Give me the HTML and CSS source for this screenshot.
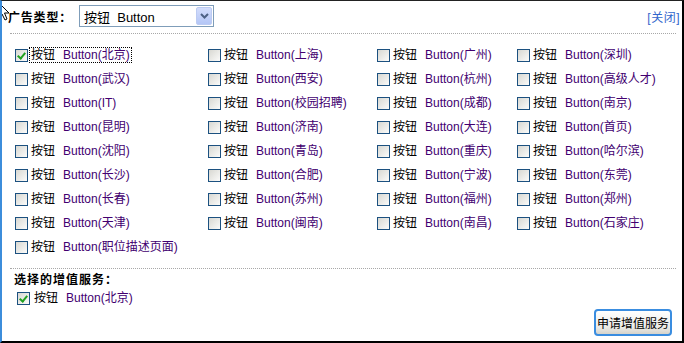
FILE: index.html
```html
<!DOCTYPE html>
<html lang="zh-CN">
<head>
  <meta charset="UTF-8">
  <title>广告类型</title>
  <link rel="stylesheet" href="styles.css">
</head>
<body>
  <div class="panel">
    <div class="head">
      <span class="head-title">广告类型：</span>
      <div class="select">
        <span class="select-value">按钮&nbsp; Button</span>
        <span class="select-arrow">
          <svg width="9" height="6" viewBox="0 0 9 6"><path d="M1 1 L4.5 4.5 L8 1" fill="none" stroke="#4d6185" stroke-width="2"/></svg>
        </span>
      </div>
      <a class="close" href="#">[关闭]</a>
    </div>

    <div class="types">
      <label class="item"><span class="cb checked"></span><span class="txt focus">按钮<span class="en">Button(北京)</span></span></label>
      <label class="item"><span class="cb"></span><span class="txt">按钮<span class="en">Button(上海)</span></span></label>
      <label class="item"><span class="cb"></span><span class="txt">按钮<span class="en">Button(广州)</span></span></label>
      <label class="item"><span class="cb"></span><span class="txt">按钮<span class="en">Button(深圳)</span></span></label>

      <label class="item"><span class="cb"></span><span class="txt">按钮<span class="en">Button(武汉)</span></span></label>
      <label class="item"><span class="cb"></span><span class="txt">按钮<span class="en">Button(西安)</span></span></label>
      <label class="item"><span class="cb"></span><span class="txt">按钮<span class="en">Button(杭州)</span></span></label>
      <label class="item"><span class="cb"></span><span class="txt">按钮<span class="en">Button(高级人才)</span></span></label>

      <label class="item"><span class="cb"></span><span class="txt">按钮<span class="en">Button(IT)</span></span></label>
      <label class="item"><span class="cb"></span><span class="txt">按钮<span class="en">Button(校园招聘)</span></span></label>
      <label class="item"><span class="cb"></span><span class="txt">按钮<span class="en">Button(成都)</span></span></label>
      <label class="item"><span class="cb"></span><span class="txt">按钮<span class="en">Button(南京)</span></span></label>

      <label class="item"><span class="cb"></span><span class="txt">按钮<span class="en">Button(昆明)</span></span></label>
      <label class="item"><span class="cb"></span><span class="txt">按钮<span class="en">Button(济南)</span></span></label>
      <label class="item"><span class="cb"></span><span class="txt">按钮<span class="en">Button(大连)</span></span></label>
      <label class="item"><span class="cb"></span><span class="txt">按钮<span class="en">Button(首页)</span></span></label>

      <label class="item"><span class="cb"></span><span class="txt">按钮<span class="en">Button(沈阳)</span></span></label>
      <label class="item"><span class="cb"></span><span class="txt">按钮<span class="en">Button(青岛)</span></span></label>
      <label class="item"><span class="cb"></span><span class="txt">按钮<span class="en">Button(重庆)</span></span></label>
      <label class="item"><span class="cb"></span><span class="txt">按钮<span class="en">Button(哈尔滨)</span></span></label>

      <label class="item"><span class="cb"></span><span class="txt">按钮<span class="en">Button(长沙)</span></span></label>
      <label class="item"><span class="cb"></span><span class="txt">按钮<span class="en">Button(合肥)</span></span></label>
      <label class="item"><span class="cb"></span><span class="txt">按钮<span class="en">Button(宁波)</span></span></label>
      <label class="item"><span class="cb"></span><span class="txt">按钮<span class="en">Button(东莞)</span></span></label>

      <label class="item"><span class="cb"></span><span class="txt">按钮<span class="en">Button(长春)</span></span></label>
      <label class="item"><span class="cb"></span><span class="txt">按钮<span class="en">Button(苏州)</span></span></label>
      <label class="item"><span class="cb"></span><span class="txt">按钮<span class="en">Button(福州)</span></span></label>
      <label class="item"><span class="cb"></span><span class="txt">按钮<span class="en">Button(郑州)</span></span></label>

      <label class="item"><span class="cb"></span><span class="txt">按钮<span class="en">Button(天津)</span></span></label>
      <label class="item"><span class="cb"></span><span class="txt">按钮<span class="en">Button(闽南)</span></span></label>
      <label class="item"><span class="cb"></span><span class="txt">按钮<span class="en">Button(南昌)</span></span></label>
      <label class="item"><span class="cb"></span><span class="txt">按钮<span class="en">Button(石家庄)</span></span></label>

      <label class="item"><span class="cb"></span><span class="txt">按钮<span class="en">Button(职位描述页面)</span></span></label>
    </div>

    <div class="chosen">
      <div class="chosen-title">选择的增值服务：</div>
      <label class="item chosen-item"><span class="cb checked"></span><span class="txt">按钮<span class="en">Button(北京)</span></span></label>
      <div class="actions">
        <button class="apply">申请增值服务</button>
      </div>
    </div>

    <svg class="cursor" width="12" height="19" viewBox="0 0 12 19"><path d="M-3 1 L-3 15 L0 12 L3 18 L5 17 L2.5 11 L7 11 Z" fill="#fff" stroke="#000" stroke-width="1"/></svg>
  </div>
</body>
</html>
```

FILE: styles.css
```css
body {
  margin: 0;
  background-color: #fff;
  font-family: "Liberation Sans", "Noto Sans CJK SC", sans-serif;
  font-size: 12px;
  color: #000;
}
.panel {
  position: relative;
  height: 343px;
  box-sizing: border-box;
  border-top: 1px solid #222;
  border-left: 2px solid #3c8ddb;
  border-right: 2px solid #000;
  border-bottom: 2px solid #000;
  overflow: hidden;
}
.head {
  display: flex;
  align-items: center;
  height: 22px;
  padding: 4px 2px 0 6px;
}
.head-title {
  width: 71px;
  font-weight: bold;
  letter-spacing: 0.8px;
  white-space: nowrap;
}
.select {
  display: flex;
  align-items: center;
  justify-content: space-between;
  width: 135px;
  height: 22px;
  box-sizing: border-box;
  border: 1px solid #7f9db9;
  padding: 0 1px 0 4px;
  font-size: 13px;
}
.select-value {
  color: #000;
  white-space: nowrap;
}
.select-arrow {
  display: flex;
  align-items: center;
  justify-content: center;
  width: 16px;
  height: 18px;
  box-sizing: border-box;
  border: 1px solid #bccbf2;
  border-radius: 2px;
  background: linear-gradient(#d3ddfc, #b4c6f6);
}
.close {
  margin-left: auto;
  color: #3366cc;
  text-decoration: none;
  font-size: 12px;
  letter-spacing: 0.5px;
}
.types {
  display: grid;
  grid-template-columns: 193px 169px 140px 1fr;
  grid-auto-rows: 24px;
  align-items: center;
  margin: 6px 6px 0 8px;
  padding: 9px 0 0 5px;
  border-top: 1px dotted #a8a8a8;
}
.item {
  display: flex;
  align-items: center;
  gap: 2px;
  white-space: nowrap;
  line-height: 14px;
}
.cb {
  position: relative;
  width: 13px;
  height: 13px;
  box-sizing: border-box;
  border: 1px solid #1c5180;
  background: linear-gradient(135deg, #d8d8d2, #fbfbfa);
  flex: none;
}
.cb.checked::after {
  content: "";
  position: absolute;
  left: 3px;
  top: 1px;
  width: 3px;
  height: 6px;
  border: solid #21a121;
  border-width: 0 2px 2px 0;
  transform: rotate(40deg);
}
.txt {
  padding: 0 1px;
}
.txt.focus {
  outline: 1px dotted #000;
}
.en {
  margin-left: 8px;
  color: #420070;
}
.chosen {
  margin: 9px 6px 0 8px;
  border-top: 1px dotted #a8a8a8;
}
.chosen-title {
  margin-top: 3px;
  padding-left: 4px;
  height: 16px;
  line-height: 16px;
  font-weight: bold;
  letter-spacing: 1px;
}
.chosen-item {
  height: 20px;
  padding-left: 7px;
  gap: 3px;
}
.actions {
  display: flex;
  justify-content: flex-end;
  margin-top: 1px;
  padding-right: 4px;
}
.apply {
  width: 78px;
  height: 27px;
  padding: 0;
  border: 2px solid #3a8de0;
  border-radius: 4px;
  background: linear-gradient(#ffffff, #ecebe6 70%, #d6d3cb);
  font-family: "Liberation Sans", "Noto Sans CJK SC", sans-serif;
  font-size: 12px;
  color: #000;
}
.cursor {
  position: absolute;
  left: 0;
  top: 1px;
}
```
